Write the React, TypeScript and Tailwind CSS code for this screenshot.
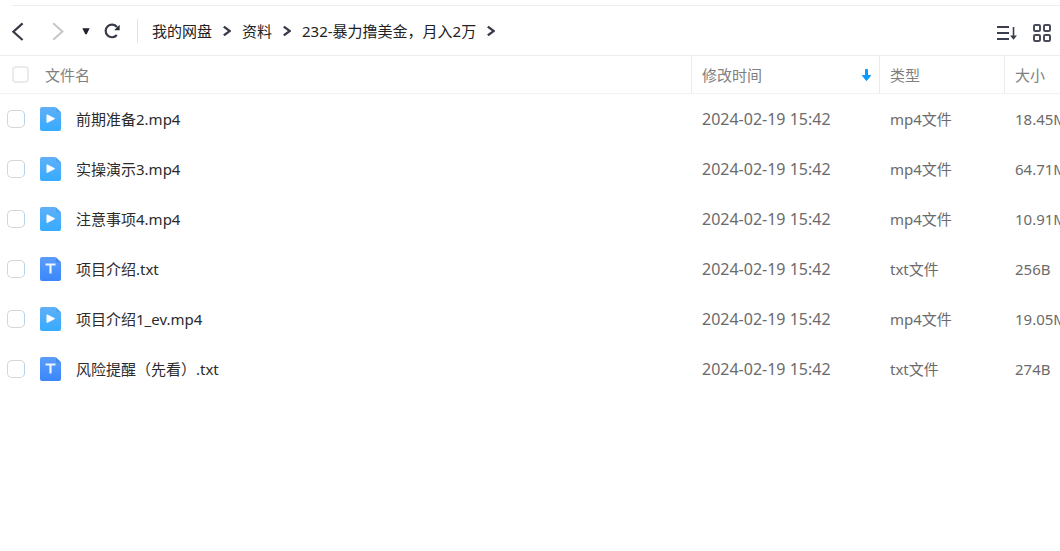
import React, { useState } from 'react';

type FileKind = 'mp4' | 'txt';

interface FileItem {
  name: string;
  time: string;
  kind: FileKind;
  size: string;
}

const FILES: FileItem[] = [
  { name: '前期准备2.mp4', time: '2024-02-19 15:42', kind: 'mp4', size: '18.45MB' },
  { name: '实操演示3.mp4', time: '2024-02-19 15:42', kind: 'mp4', size: '64.71MB' },
  { name: '注意事项4.mp4', time: '2024-02-19 15:42', kind: 'mp4', size: '10.91MB' },
  { name: '项目介绍.txt', time: '2024-02-19 15:42', kind: 'txt', size: '256B' },
  { name: '项目介绍1_ev.mp4', time: '2024-02-19 15:42', kind: 'mp4', size: '19.05MB' },
  { name: '风险提醒（先看）.txt', time: '2024-02-19 15:42', kind: 'txt', size: '274B' },
];

const PATH = ['我的网盘', '资料', '232-暴力撸美金，月入2万'];

const FileIcon = ({ kind }: { kind: FileKind }) => {
  const isVideo = kind === 'mp4';
  return (
    <svg className="w-[21px] h-6 shrink-0" viewBox="0 0 21 24" aria-hidden="true">
      <defs>
        <linearGradient id={`fill-${kind}`} x1="0" y1="0" x2="0" y2="1">
          <stop offset="0" stopColor={isVideo ? '#5fb0f8' : '#5b9dfb'} />
          <stop offset="1" stopColor={isVideo ? '#36abff' : '#3a86fa'} />
        </linearGradient>
      </defs>
      <path
        d="M2 0h12.6a2 2 0 0 1 1.4.6l4.2 4A2.4 2.4 0 0 1 21 6.4V22a2 2 0 0 1-2 2H2a2 2 0 0 1-2-2V2a2 2 0 0 1 2-2z"
        fill={`url(#fill-${kind})`}
      />
      <path d="M16 .6l4.2 4c.3.3.5.6.6 1H17.500a1.500 1.500 0 0 1-1.500-1.500z" fill={isVideo ? '#4ba5f3' : '#4489ee'} />
      {isVideo ? (
        <path
          d="M6.8 8.200v7a.4.4 0 0 0 .6.4l6.800-3.500a.4.4 0 0 0 0-.8l-6.800-3.500a.4.4 0 0 0-.6.4z"
          fill="#fff"
          stroke="#fff"
          strokeWidth=".6"
        />
      ) : (
        <path d="M5.500 7.500h10M10.500 7.500v9" fill="none" stroke="#eef5ff" strokeWidth="2.200" />
      )}
    </svg>
  );
};

const Separator = () => (
  <svg className="w-2 h-3 mx-[11px]" viewBox="0 0 8 12" fill="none" stroke="#383b49" strokeWidth="2.4" aria-hidden="true">
    <path d="M.8 1.600l6 4.400-6 4.400" />
  </svg>
);

const Toolbar = () => (
  <div className="flex items-center h-[50px] border-b border-[#ededed] pl-3 pr-[9px]">
    <button type="button" aria-label="后退">
      <svg className="w-3 h-5" viewBox="0 0 12 20" fill="none" stroke="#373a48" strokeWidth="2.2">
        <path d="M10.600 2.400L1.400 10.800l9.200 8.200" />
      </svg>
    </button>
    <button type="button" aria-label="前进" className="ml-7">
      <svg className="w-3 h-5" viewBox="0 0 12 20" fill="none" stroke="#c5c6ca" strokeWidth="2">
        <path d="M1.2 2.2l9.2 8.3-9.2 8.3" />
      </svg>
    </button>
    <button type="button" aria-label="历史" className="ml-[18px]">
      <svg className="w-2 h-2" viewBox="0 0 8 8" fill="#20222f">
        <path d="M.3 1.3h7.4L4.8 6.9a.9.9 0 0 1-1.6 0z" />
      </svg>
    </button>
    <button type="button" aria-label="刷新" className="ml-[14px]">
      <svg className="w-4 h-4" viewBox="0 0 16 16" fill="none">
        <path d="M12.800 12A6.300 6.300 0 1 1 12.900 4" stroke="#373a48" strokeWidth="2.2" />
        <path d="M15.600 1.800v5.400h-5.400z" fill="#272a38" />
      </svg>
    </button>
    <div className="w-px h-6 bg-[#e3e3e5] ml-[17px] mr-[14px]" />
    <nav className="flex items-center whitespace-nowrap text-[#222]">
      {PATH.map((item) => (
        <React.Fragment key={item}>
          <a href="#">{item}</a>
          <Separator />
        </React.Fragment>
      ))}
    </nav>
    <div className="flex items-center gap-4 ml-auto pt-1">
      <button type="button" aria-label="排序">
        <svg className="w-5 h-[18px]" viewBox="0 0 20 18" fill="none" stroke="#3b3e4c" strokeWidth="2">
          <path d="M0 3h12M0 9h12M0 15h12" />
          <path d="M16.5 3v10" strokeWidth="1.6" />
          <path d="M13 11.4h7l-3.5 4.4z" fill="#3b3e4c" stroke="none" />
        </svg>
      </button>
      <button type="button" aria-label="网格视图">
        <svg className="w-[18px] h-[18px]" viewBox="0 0 18 18" fill="none" stroke="#484b58" strokeWidth="2">
          <rect x="1" y="1" width="6" height="6" rx="1.2" />
          <rect x="11" y="1" width="6" height="6" rx="1.2" />
          <rect x="1" y="11" width="6" height="6" rx="1.2" />
          <rect x="11" y="11" width="6" height="6" rx="1.2" />
        </svg>
      </button>
    </div>
  </div>
);

export default function App() {
  const [selected, setSelected] = useState<string[]>([]);

  const toggle = (name: string) => {
    setSelected((prev) => (prev.includes(name) ? prev.filter((n) => n !== name) : [...prev, name]));
  };

  const allSelected = selected.length === FILES.length;

  return (
    <div className="min-h-screen overflow-hidden bg-white font-['Noto_Sans','Noto_Sans_CJK_SC',sans-serif] text-[15px] leading-5 text-[#2b2b2b]">
      <div className="ml-3 mt-[5px] h-px bg-[#ededed]" />
      <Toolbar />

      <table className="w-full table-fixed border-separate border-spacing-0 text-left whitespace-nowrap">
        <colgroup>
          <col />
          <col className="w-[188px]" />
          <col className="w-[125px]" />
          <col className="w-14" />
        </colgroup>
        <thead className="text-[#808080]">
          <tr className="h-[38px]">
            <th className="border-b border-[#f2f2f2] font-normal pl-3">
              <div className="flex items-center gap-4">
                <input
                  type="checkbox"
                  aria-label="全选"
                  checked={allSelected}
                  onChange={() => setSelected(allSelected ? [] : FILES.map((f) => f.name))}
                  className="appearance-none size-[17px] rounded border-2 border-[#ebebeb] checked:bg-[#06a7ff]"
                />
                文件名
              </div>
            </th>
            <th className="border-b border-l border-b-[#f2f2f2] border-l-[#ebebeb] font-normal px-[10px]">
              <div className="flex items-center justify-between">
                修改时间
                <svg className="w-[9px] h-3 mr-[-2px]" viewBox="0 0 9 12" fill="#0a9bff" aria-hidden="true">
                  <path d="M3 .8a.8.8 0 0 1 .8-.8h1.4a.8.8 0 0 1 .8.8V6h2.3a.6.6 0 0 1 .5 1L5.1 11.6a.8.8 0 0 1-1.2 0L.2 7a.6.6 0 0 1 .5-1H3z" />
                </svg>
              </div>
            </th>
            <th className="border-b border-l border-b-[#f2f2f2] border-l-[#ebebeb] font-normal pl-[10px]">类型</th>
            <th className="border-b border-l border-b-[#f2f2f2] border-l-[#ebebeb] font-normal pl-[10px]">大小</th>
          </tr>
        </thead>
        <tbody className="text-[#6b6b6b]">
          {FILES.map((file) => (
            <tr key={file.name} className="h-[50px]">
              <td className="pl-[7px]">
                <label className="flex items-center gap-[15px] text-[#2b2b2b]">
                  <input
                    type="checkbox"
                    checked={selected.includes(file.name)}
                    onChange={() => toggle(file.name)}
                    className="appearance-none size-[18px] rounded-[5px] border border-[#d4d6da] border-r-[#b5d2e6] checked:bg-[#06a7ff]"
                  />
                  <FileIcon kind={file.kind} />
                  {file.name}
                </label>
              </td>
              <td className="pl-[11px] text-base">{file.time}</td>
              <td className="pl-[11px]">{file.kind}文件</td>
              <td className="pl-[11px] overflow-hidden">{file.size}</td>
            </tr>
          ))}
        </tbody>
      </table>
    </div>
  );
}
